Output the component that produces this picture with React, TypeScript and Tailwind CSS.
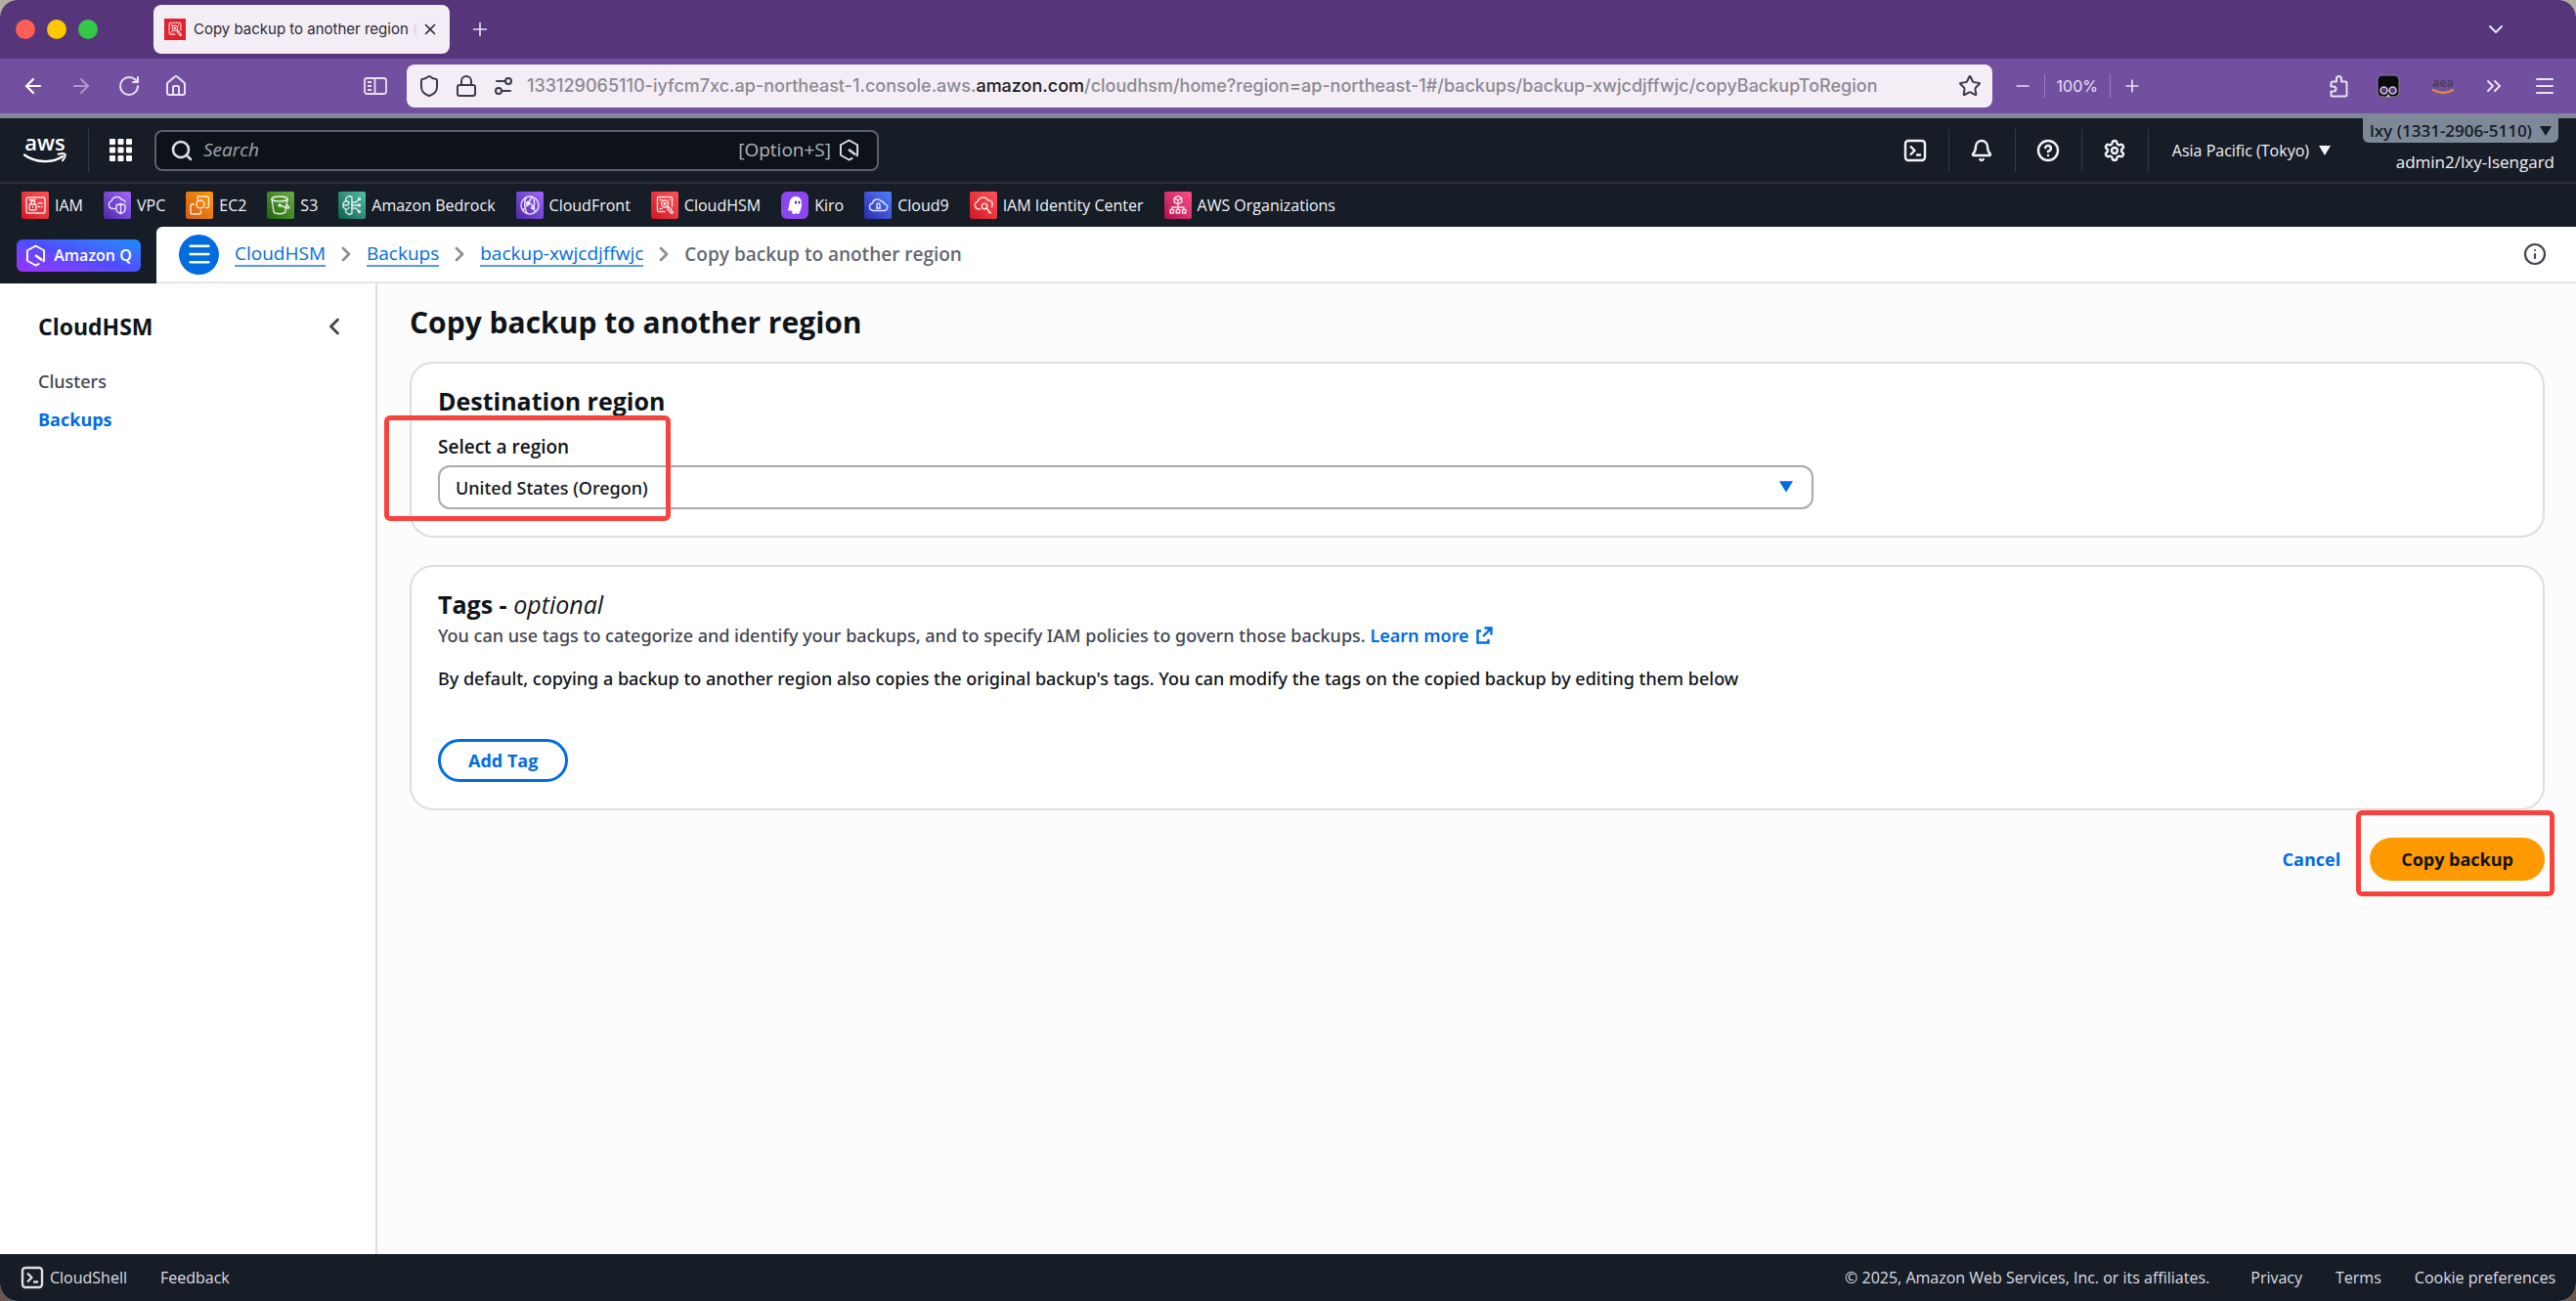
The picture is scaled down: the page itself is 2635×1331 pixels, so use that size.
import React, { useState } from 'react';
import {
  ArrowLeft,
  ArrowRight,
  Bell,
  ChevronDown,
  ChevronLeft,
  ChevronRight,
  ChevronsRight,
  CircleQuestionMark,
  House,
  Info,
  Lock,
  Menu,
  Minus,
  Plus,
  RotateCw,
  Search,
  Settings,
  Settings2,
  Shield,
  Star,
  X,
} from 'lucide-react';

interface GlyphProps {
  className?: string;
}

// Stroke-only service glyphs, all drawn on a 28x28 tile
function ServiceGlyph({ children }: { children: React.ReactNode }) {
  return (
    <svg
      viewBox="0 0 28 28"
      className="size-7"
      fill="none"
      stroke="#fff"
      strokeOpacity="0.85"
      strokeWidth="1.4"
      strokeLinecap="round"
      strokeLinejoin="round"
      aria-hidden="true"
    >
      {children}
    </svg>
  );
}

const favorites = [
  {
    name: 'IAM',
    tile: 'bg-linear-to-tr from-[#cf1322] to-[#ff5257] rounded-xs',
    glyph: (
      <>
        <rect x="5" y="6" width="19" height="16" rx="1.5" />
        <path d="M8 8.500h6M17 12h4M17 15.500h1.500M20.500 15.500h.5" />
        <rect x="8" y="13" width="7" height="6" rx="1" />
        <path d="M9.500 13v-1.500a2 2 0 0 1 4 0V13M11.500 15.500v1" />
      </>
    ),
  },
  {
    name: 'VPC',
    tile: 'bg-linear-to-tr from-[#4d27a8] to-[#a166ff] rounded-xs',
    glyph: (
      <>
        <path d="M11.500 17.500H9a4 4 0 0 1-.8-7.800 5.500 5.500 0 0 1 10.300-1.200 3.300 3.300 0 0 1 3.800 2.200" />
        <path d="M17.500 12.500l4.500 1.500v4c0 2.200-1.800 3.600-4.500 4.700-2.700-1.100-4.500-2.500-4.500-4.700v-4zM17.500 12.500V22.500" />
      </>
    ),
  },
  {
    name: 'EC2',
    tile: 'bg-linear-to-tr from-[#d05c17] to-[#ff9900] rounded-xs',
    glyph: (
      <>
        <path d="M12 8V6.500A1.500 1.500 0 0 1 13.500 5H22a1.500 1.500 0 0 1 1.500 1.500V15a1.500 1.500 0 0 1-1.500 1.500h-1.500" />
        <circle cx="15" cy="13" r="4" />
        <path d="M8.500 13H6.500A1.500 1.500 0 0 0 5 14.500V21.500A1.500 1.500 0 0 0 6.500 23H14a1.500 1.500 0 0 0 1.500-1.500v-2" />
      </>
    ),
  },
  {
    name: 'S3',
    tile: 'bg-linear-to-tr from-[#1b660f] to-[#6cae3e] rounded-xs',
    glyph: (
      <>
        <ellipse cx="13" cy="7.500" rx="8" ry="2.500" />
        <path d="M5 7.500l2 13c.5 1.500 3 2.200 6 2.200s5.500-.7 6-2.200l2-13" />
        <path d="M13 14l8 2.800c2 .6 2.500-.8.800-1.900l-1.500-.9" />
        <circle cx="13" cy="14" r="1" />
      </>
    ),
  },
  {
    name: 'Amazon Bedrock',
    tile: 'bg-linear-to-tr from-[#055f4e] to-[#56c0a7] rounded-xs',
    glyph: (
      <>
        <path d="M14 5.500l-3-1-3 2-.5 3L5 12v4l2.500 2 .5 3.500 3 2 3-1zM8 9.500l3 1.500M5.500 14h4l1.500-2M8 18.500l3-2" />
        <path d="M14 11h4l2.500-2.500M14 14h6M14 17h4l2.500 2.500" />
        <circle cx="21.500" cy="7.500" r="1" />
        <circle cx="21.500" cy="14" r="1" />
        <circle cx="21.500" cy="20.500" r="1" />
      </>
    ),
  },
  {
    name: 'CloudFront',
    tile: 'bg-linear-to-tr from-[#4d27a8] to-[#a166ff] rounded-xs',
    glyph: (
      <>
        <circle cx="14" cy="14" r="9" />
        <path d="M10 6c-2 5-1.500 11 1 16M16.500 5.500l-5 7M13 11c3 2 5.500 5 6 9M7 19c1.500-3 3.500-4.500 6-6M18 8c1 3 1 6-1 9.500" />
        <circle cx="12" cy="12" r="1.500" />
        <circle cx="17" cy="16.500" r="1.200" />
      </>
    ),
  },
  {
    name: 'CloudHSM',
    tile: 'bg-linear-to-tr from-[#cf1322] to-[#ff5257] rounded-xs',
    glyph: (
      <>
        <path d="M14 20.500H8A1.500 1.500 0 0 1 6.500 19V7A1.500 1.500 0 0 1 8 5.500h12A1.500 1.500 0 0 1 21.500 7v8" />
        <path d="M9 8.500h2M9 17.500h2M18.500 8.500h.5" />
        <circle cx="14" cy="12.500" r="3.500" />
        <circle cx="14" cy="12.500" r="1" />
        <path d="M17 15l2 1.500 3.500 5-1.500 1-4-4.500z" />
      </>
    ),
  },
  {
    name: 'Kiro',
    tile: 'bg-[#8b46ef] rounded-md',
    glyph: (
      <>
        <path
          d="M9 19.500c-1 0-2.200.2-1.800-1.200C8.300 15 8 12.500 9 9.500 10 6.500 12 5 15 5c4 0 6 3 6 7.500 0 4-1 7-2.500 9.500-1 1.500-2.500 1.200-3-.3-1 1.500-3.500 2-4.200.3-.3-.8 0-1.600.2-2.300-.8.300-1.600-.2-2.500-.2z"
          fill="#fff"
          fillOpacity="1"
          stroke="none"
        />
        <ellipse cx="15" cy="11" rx="1" ry="1.600" fill="#3b1d6e" stroke="none" />
        <ellipse cx="18.500" cy="11" rx="1" ry="1.600" fill="#3b1d6e" stroke="none" />
      </>
    ),
  },
  {
    name: 'Cloud9',
    tile: 'bg-linear-to-tr from-[#2e27ad] to-[#527fff] rounded-xs',
    glyph: (
      <>
        <path d="M9 19.500h11a3.500 3.500 0 0 0 .5-7A3 3 0 0 0 17.500 10 5 5 0 0 0 8.500 12 3.800 3.800 0 0 0 9 19.500z" />
        <path d="M13 17v-3.500a1.500 1.500 0 0 1 3 0V17M12.500 17h4" />
      </>
    ),
  },
  {
    name: 'IAM Identity Center',
    tile: 'bg-linear-to-tr from-[#cf1322] to-[#ff5257] rounded-xs',
    glyph: (
      <>
        <path d="M10.500 18H9a4 4 0 0 1-.8-7.800A5.500 5.500 0 0 1 18.500 9a4 4 0 0 1 3.800 6.500" />
        <circle cx="15" cy="15" r="2.800" />
        <path d="M17 17l4.500 5M19.500 21.500l1-1" />
      </>
    ),
  },
  {
    name: 'AWS Organizations',
    tile: 'bg-linear-to-tr from-[#b0084d] to-[#ff4f8b] rounded-xs',
    glyph: (
      <>
        <path d="M14 4.500l3.800 2.200v4.200L14 13l-3.800-2.100V6.700zM10.200 6.700L14 9l3.800-2.300M14 9v4M14 13v5M8 18.500V16h12v2.500" />
        <rect x="6" y="18.500" width="3.500" height="3.500" />
        <rect x="12.200" y="18.500" width="3.500" height="3.500" />
        <rect x="18.500" y="18.500" width="3.500" height="3.500" />
      </>
    ),
  },
];

const regions = ['United States (Oregon)', 'United States (Ohio)', 'Europe (Ireland)'];

function AwsLogo() {
  return (
    <svg viewBox="0 0 44 44" className="size-11" aria-label="AWS">
      <text x="22" y="22" fill="#fff" fontSize="22" fontFamily="Open Sans, sans-serif" fontWeight="600" textAnchor="middle">
        aws
      </text>
      <path d="M1 26.500C12 34.500 29 35.500 40 28" fill="none" stroke="#fff" strokeWidth="2.400" strokeLinecap="round" />
      <path d="M35.500 25.800c2.500-.8 6-.9 7 0 .7 1.200-.6 4.500-2.500 6.500" fill="none" stroke="#fff" strokeWidth="2" strokeLinecap="round" />
    </svg>
  );
}

function ShellIcon({ className = '' }: GlyphProps) {
  return (
    <svg viewBox="0 0 24 24" className={className} fill="none" stroke="currentColor" strokeWidth="2.400" strokeLinejoin="round" aria-hidden="true">
      <rect x="2" y="2" width="20" height="20" rx="3" />
      <path d="M7 7.500l4.500 4.500L7 16.500M13 16.500h5" />
    </svg>
  );
}

function HexQ({ className = '' }: GlyphProps) {
  return (
    <svg viewBox="0 0 22 24" className={className} fill="none" stroke="currentColor" strokeWidth="2" strokeLinejoin="round" aria-hidden="true">
      <path d="M15 20.500l-4 2-9-5v-11l9-5 9 5v11l-1.500 1" />
      <path d="M10.500 11.500l7.500 5.500" strokeWidth="2.600" />
    </svg>
  );
}

function GridDots() {
  return (
    <svg viewBox="0 0 23 23" className="size-[23px]" fill="#fff" aria-hidden="true">
      {[0, 8.5, 17].map((y) => [0, 8.5, 17].map((x) => <rect key={`${x}-${y}`} x={x} y={y} width="6" height="6" rx="1" />))}
    </svg>
  );
}

function Caret({ className = '' }: GlyphProps) {
  return (
    <svg viewBox="0 0 12 10" className={className} fill="currentColor" aria-hidden="true">
      <path d="M0 0h12L6 10z" />
    </svg>
  );
}

function ExternalIcon() {
  return (
    <svg viewBox="0 0 18 18" className="size-[18px]" fill="none" stroke="currentColor" strokeWidth="2.400" aria-hidden="true">
      <path d="M9.500 1.500h7V8.500M16.500 1.500L8 10M6 4.500H2.500v12h11V13" />
    </svg>
  );
}

function SidebarIcon() {
  return (
    <svg viewBox="0 0 24 20" className="h-5 w-6" fill="none" stroke="currentColor" strokeWidth="1.800" aria-hidden="true">
      <rect x="1" y="2" width="22" height="16" rx="2.500" />
      <path d="M11.500 2v16M4 6h4M4 10h4M4 14h4" />
    </svg>
  );
}

function PuzzleIcon() {
  return (
    <svg viewBox="0 0 20 24" className="h-6 w-5" fill="none" stroke="currentColor" strokeWidth="2" strokeLinejoin="round" aria-hidden="true">
      <path d="M3 7.500h4V4.500a2.500 2.500 0 0 1 5 0v3h4A1.500 1.500 0 0 1 17.500 9v12a1.500 1.500 0 0 1-1.500 1.500H3A1.500 1.500 0 0 1 1.500 21v-3.500H4a2.500 2.500 0 0 0 0-5H1.500V9A1.500 1.500 0 0 1 3 7.500z" />
    </svg>
  );
}

function MaskIcon() {
  return (
    <svg viewBox="0 0 24 24" className="size-6" aria-hidden="true">
      <rect x="1" y="1" width="22" height="22" rx="5" fill="#0b0b0b" stroke="#8d8496" />
      <circle cx="7.500" cy="16.500" r="3.500" fill="#5a3a80" stroke="#cfc6d8" strokeWidth="1.600" />
      <circle cx="16.500" cy="16.500" r="3.500" fill="#5a3a80" stroke="#cfc6d8" strokeWidth="1.600" />
      <path d="M10 23l2-3 2 3z" fill="#cfc6d8" />
    </svg>
  );
}

function AeaIcon() {
  return (
    <svg viewBox="0 0 24 24" className="size-6" aria-hidden="true">
      <text x="12" y="13" fontSize="12" fontWeight="700" fontFamily="Open Sans, sans-serif" textAnchor="middle" fill="#4a4256">
        aea
      </text>
      <path d="M2 16c6 4 14 4 20 0" fill="none" stroke="#e08a3c" strokeWidth="2.400" strokeLinecap="round" />
    </svg>
  );
}

function BrowserChrome() {
  return (
    <div className="font-['Inter',sans-serif] text-[#e9e1f3]">
      <div className="flex h-15 items-center bg-[#56357b] pl-4">
        <div className="flex gap-3">
          <span className="size-5 rounded-full bg-[#ff5f57]" />
          <span className="size-5 rounded-full bg-[#fcc800]" />
          <span className="size-5 rounded-full bg-[#34c84a]" />
        </div>
        <div className="ml-[57px] flex h-[50px] w-[303px] items-center rounded-lg bg-[#f3eef6] px-[11px] text-[#2b2a33]">
          <span className="flex size-[22px] shrink-0 items-center justify-center bg-[#e0222e]">
            <ServiceGlyph>{favorites[6].glyph}</ServiceGlyph>
          </span>
          <span className="ml-2 flex-1 text-[15px] whitespace-nowrap">
            Copy backup to another region <span className="text-[#d5cfda]">(</span>
          </span>
          <button type="button" aria-label="Close tab">
            <X className="size-[18px]" strokeWidth={2.2} />
          </button>
        </div>
        <button type="button" aria-label="New tab" className="ml-5">
          <Plus className="size-[22px]" strokeWidth={1.8} />
        </button>
        <button type="button" aria-label="List all tabs" className="mr-[70px] ml-auto">
          <ChevronDown className="size-6" />
        </button>
      </div>

      <div className="flex h-14 items-center bg-[#724f9f] pr-5 pl-[22px]">
        <button type="button" aria-label="Back">
          <ArrowLeft className="size-6 text-white" strokeWidth={2.2} />
        </button>
        <button type="button" aria-label="Forward" className="ml-[25px] opacity-50">
          <ArrowRight className="size-6" />
        </button>
        <button type="button" aria-label="Reload" className="ml-[25px]">
          <RotateCw className="size-6" />
        </button>
        <button type="button" aria-label="Home" className="ml-6">
          <House className="size-6" />
        </button>
        <button type="button" aria-label="Sidebar" className="ml-[180px]">
          <SidebarIcon />
        </button>
        <div className="ml-5 flex h-11 flex-1 items-center rounded-lg bg-[#f3eef6] px-[11px] text-[#3c3a44]">
          <Shield className="size-6" />
          <Lock className="ml-3.5 size-6" />
          <Settings2 className="ml-3.5 size-6 -scale-x-100" />
          <span className="ml-3 flex-1 text-lg font-medium whitespace-nowrap text-[#8d8993]">
            133129065110-iyfcm7xc.ap-northeast-1.console.aws.<span className="text-[#1c1b22]">amazon.com</span>
            /cloudhsm/home?region=ap-northeast-1#/backups/backup-xwjcdjffwjc/copyBackupToRegion
          </span>
          <Star className="size-6" />
        </div>
        <div className="ml-[21px] flex items-center gap-3">
          <button type="button" aria-label="Zoom out">
            <Minus className="size-5" />
          </button>
          <span className="h-6 w-px bg-[#9a80ba]" />
          <span className="text-base">100%</span>
          <span className="h-6 w-px bg-[#9a80ba]" />
          <button type="button" aria-label="Zoom in">
            <Plus className="size-5" />
          </button>
        </div>
        <div className="ml-[192px] flex items-center gap-7">
          <PuzzleIcon />
          <MaskIcon />
          <span className="ml-1">
            <AeaIcon />
          </span>
          <ChevronsRight className="size-6" />
          <Menu className="size-6" />
        </div>
      </div>
    </div>
  );
}

function ConsoleHeader() {
  const tools = [
    { label: 'CloudShell', icon: <ShellIcon className="size-6" /> },
    { label: 'Notifications', icon: <Bell className="size-6" strokeWidth={2.4} /> },
    { label: 'Help', icon: <CircleQuestionMark className="size-6" strokeWidth={2.4} /> },
    { label: 'Settings', icon: <Settings className="size-6" strokeWidth={2.4} /> },
  ];

  return (
    <header className="border-t-[5px] border-[#7d8998] bg-[#161d26] text-[#f3f3f7]">
      <div className="flex h-[67px] items-center border-b-2 border-[#2b303b] pl-6">
        <AwsLogo />
        <span className="ml-[22px] h-11 w-px bg-[#333a46]" />
        <button type="button" aria-label="Services" className="ml-[21px]">
          <GridDots />
        </button>
        <label className="ml-[23px] flex h-[42px] w-[741px] items-center rounded-lg border-2 border-[#5b616d] bg-[#0d1219] pr-[18px] pl-3.5">
          <Search className="size-6 text-[#dedee3]" strokeWidth={2.6} />
          <input
            type="search"
            aria-label="Search"
            placeholder="Search"
            className="ml-2.5 min-w-0 flex-1 bg-transparent text-[19px] italic outline-none placeholder:text-[#a4a4ad]"
          />
          <span className="mr-2 text-[19px] text-[#b4b4bb]">[Option+S]</span>
          <HexQ className="h-[23px] w-[21px] text-[#dedee3]" />
        </label>
        <div className="ml-auto flex items-center">
          {tools.map(({ label, icon }) => (
            <button
              key={label}
              type="button"
              aria-label={label}
              className="flex h-11 w-[68px] items-center justify-center border-r border-[#333a46]"
            >
              {icon}
            </button>
          ))}
          <button type="button" className="ml-6 flex items-center gap-2.5 text-base font-medium">
            Asia Pacific (Tokyo)
            <Caret className="h-2.5 w-3" />
          </button>
        </div>
        <div className="mr-[18px] ml-[33px] flex flex-col items-end self-start text-[17px] font-medium">
          <button
            type="button"
            className="flex h-[25px] items-center gap-2 rounded-b-md bg-[#7d8998] px-[7px] leading-6 font-semibold text-[#161d26]"
          >
            lxy (1331-2906-5110)
            <Caret className="h-2.5 w-3" />
          </button>
          <span className="mt-2 mr-1 leading-6">admin2/lxy-Isengard</span>
        </div>
      </div>

      <nav aria-label="Favorites" className="flex h-11 items-center gap-[21px] pl-[22px]">
        {favorites.map((fav) => (
          <a key={fav.name} href="#" className="flex items-center gap-1.5 text-base font-medium whitespace-nowrap">
            <span className={fav.tile}>
              <ServiceGlyph>{fav.glyph}</ServiceGlyph>
            </span>
            {fav.name}
          </a>
        ))}
      </nav>
    </header>
  );
}

function BreadcrumbBar() {
  const crumbs = ['CloudHSM', 'Backups', 'backup-xwjcdjffwjc'];

  return (
    <div className="flex h-[58px] bg-[#161d26]">
      <div className="flex w-40 items-center pl-[17px]">
        <button
          type="button"
          className="flex h-[33px] w-[127px] items-center justify-center gap-2 rounded-md bg-linear-to-tr from-[#9b2cff] via-[#4d4dff] to-[#0a8cff] text-base font-semibold text-white"
        >
          <HexQ className="h-[23px] w-[21px]" />
          Amazon Q
        </button>
      </div>
      <div className="flex flex-1 items-center rounded-tl-md border-b-2 border-[#e6e6ea] bg-white pr-[30px] pl-[23px]">
        <button
          type="button"
          aria-label="Toggle navigation"
          className="flex size-[41px] items-center justify-center rounded-full bg-[#006ce0] text-white"
        >
          <Menu className="size-7" strokeWidth={2.2} />
        </button>
        <nav aria-label="Breadcrumbs" className="ml-4 flex items-center gap-[9px] text-[19px]">
          {crumbs.map((crumb) => (
            <React.Fragment key={crumb}>
              <a href="#" className="border-b-2 border-[#5a9bea] leading-6 font-medium text-[#006ce0]">
                {crumb}
              </a>
              <ChevronRight className="size-6 text-[#8c8c94]" strokeWidth={2.6} />
            </React.Fragment>
          ))}
          <span className="leading-6 font-semibold text-[#656871]">Copy backup to another region</span>
        </nav>
        <button type="button" aria-label="Info" className="ml-auto text-[#424650]">
          <Info className="size-6" strokeWidth={2.2} />
        </button>
      </div>
    </div>
  );
}

function SideNav() {
  return (
    <aside className="w-[386px] shrink-0 border-r-2 border-[#dedee3] bg-white pr-7 pl-[39px]">
      <div className="mt-7 flex items-center justify-between">
        <h2 className="text-[23px] leading-8 font-bold">CloudHSM</h2>
        <button type="button" aria-label="Collapse navigation">
          <ChevronLeft className="size-7 text-[#424650]" strokeWidth={2.4} />
        </button>
      </div>
      <nav aria-label="Service navigation" className="mt-7 flex flex-col gap-[15px] text-lg leading-6">
        <a href="#" className="font-['Noto_Sans',sans-serif] font-medium text-[#424650]">
          Clusters
        </a>
        <a href="#" className="font-bold text-[#006ce0]">
          Backups
        </a>
      </nav>
    </aside>
  );
}

export default function App() {
  const [region, setRegion] = useState(regions[0]);

  return (
    <div className="bg-linear-to-b from-[#b3aea0] to-[#6b5650]">
      <div className="flex min-h-screen flex-col overflow-hidden rounded-[18px] bg-[#fcfcfd] font-['Open_Sans','Noto_Sans',sans-serif] text-[#0f141a]">
        <BrowserChrome />
        <ConsoleHeader />
        <BreadcrumbBar />

        <div className="flex flex-1">
          <SideNav />
          <main className="flex-1 pt-[18px] pr-8 pl-[33px]">
            <h1 className="text-[30px] leading-[44px] font-bold">Copy backup to another region</h1>

            <section className="mt-[18px] rounded-3xl border-2 border-[#dedee3] bg-white px-[27px] pt-[22px] pb-[27px]">
              <h2 className="text-[25px] leading-8 font-bold">Destination region</h2>
              <div className="mt-[19px] grid grid-cols-3 gap-8">
                <div className="relative col-span-2">
                  <label htmlFor="region" className="block text-[19px] leading-6 font-semibold">
                    Select a region
                  </label>
                  <div className="relative mt-[7px]">
                    <select
                      id="region"
                      value={region}
                      onChange={(e) => setRegion(e.target.value)}
                      className="h-[45px] w-full appearance-none rounded-xl border-2 border-[#a9a9b0] bg-white px-4 font-['Noto_Sans',sans-serif] text-lg font-medium"
                    >
                      {regions.map((name) => (
                        <option key={name}>{name}</option>
                      ))}
                    </select>
                    <Caret className="pointer-events-none absolute top-4 right-[21px] h-3 w-3.5 text-[#006ce0]" />
                  </div>
                  <span className="pointer-events-none absolute -top-5 -left-[55px] h-[108px] w-[293px] rounded-md border-[5px] border-[#f9423d]" />
                </div>
              </div>
            </section>

            <section className="mt-7 rounded-3xl border-2 border-[#dedee3] bg-white px-[27px] pt-[22px] pb-[27px]">
              <h2 className="text-[25px] leading-8 font-bold">
                Tags - <i className="font-medium">optional</i>
              </h2>
              <p className="mt-1 font-['Noto_Sans',sans-serif] text-lg leading-6 font-medium text-[#424650]">
                You can use tags to categorize and identify your backups, and to specify IAM policies to govern those backups.{' '}
                <a href="#" className="inline-flex items-center gap-1.5 font-semibold text-[#006ce0]">
                  Learn more
                  <ExternalIcon />
                </a>
              </p>
              <p className="mt-5 font-['Noto_Sans',sans-serif] text-lg leading-6 font-medium">
                By default, copying a backup to another region also copies the original backup's tags. You can modify the tags on the
                copied backup by editing them below
              </p>
              <button
                type="button"
                className="mt-[50px] h-11 rounded-full border-[3px] border-[#006ce0] px-7 text-lg font-bold text-[#006ce0]"
              >
                Add Tag
              </button>
            </section>

            <div className="mt-7 flex items-center justify-end gap-[30px] text-lg font-bold">
              <button type="button" className="text-[#006ce0]">
                Cancel
              </button>
              <div className="relative">
                <button type="button" className="h-11 rounded-full bg-[#ff9900] px-8">
                  Copy backup
                </button>
                <span className="pointer-events-none absolute -top-7 -right-2.5 -bottom-4 -left-3.5 rounded-md border-[5px] border-[#f9423d]" />
              </div>
            </div>
          </main>
        </div>

        <footer className="flex h-12 items-center bg-[#161d26] px-[21px] text-base font-medium text-[#dedee3]">
          <button type="button" className="flex items-center gap-1.5">
            <ShellIcon className="size-6" />
            CloudShell
          </button>
          <a href="#" className="ml-[34px]">
            Feedback
          </a>
          <span className="ml-auto font-normal">© 2025, Amazon Web Services, Inc. or its affiliates.</span>
          <a href="#" className="ml-[42px]">
            Privacy
          </a>
          <a href="#" className="ml-[34px]">
            Terms
          </a>
          <a href="#" className="ml-[34px]">
            Cookie preferences
          </a>
        </footer>
      </div>
    </div>
  );
}
